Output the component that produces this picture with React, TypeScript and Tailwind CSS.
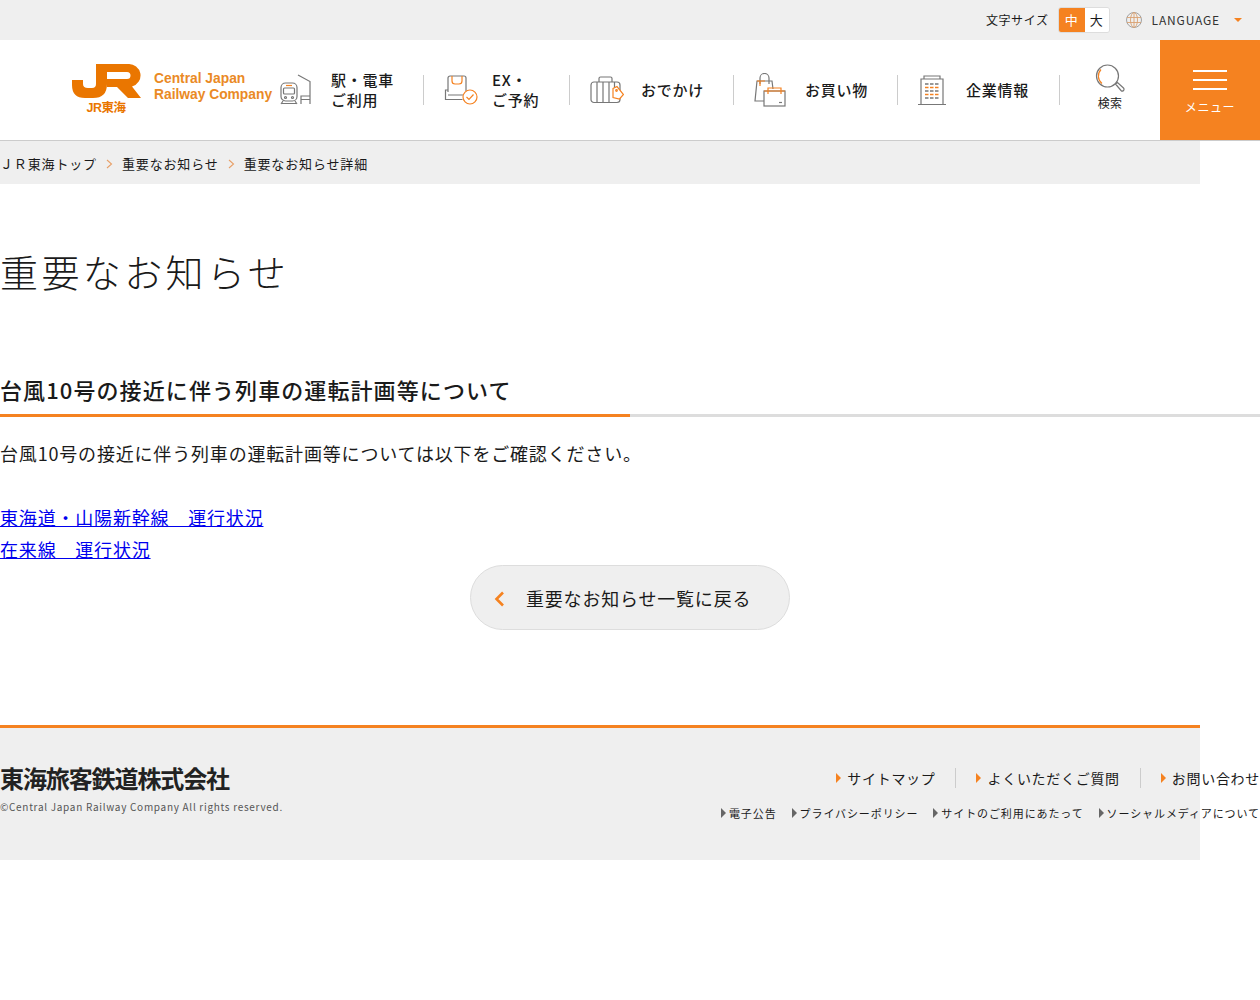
import React from "react";

const ORANGE = "#f58220";

function TrainIcon() {
  return (
    <svg width="32" height="32" viewBox="0 0 32 32" fill="none" stroke="#777" strokeWidth="1.2">
      <rect x="1" y="9" width="16" height="18" rx="4.5" />
      <rect x="3.500" y="14" width="11" height="6" rx="1" />
      <path d="M6 11.500h6" stroke={ORANGE} />
      <path d="M3 27l-2 3M15 27l2 3M2 29.500h14" />
      <circle cx="5.500" cy="23.500" r="1" />
      <circle cx="12.500" cy="23.500" r="1" />
      <path d="M18 1l12 6.500V30M21 30V22h9M21 25.500h9" />
    </svg>
  );
}

function SeatIcon() {
  return (
    <svg width="34" height="30" viewBox="0 0 34 30" fill="none" stroke="#777" strokeWidth="1.2">
      <path d="M4 17V3a2 2 0 0 1 2-2h14a2 2 0 0 1 2 2v13" />
      <path d="M8 1v5a3 3 0 0 0 3 3h4a3 3 0 0 0 3-3V1" stroke={ORANGE} />
      <path d="M4 15H1.500v9.500h17M4 20h15" />
      <circle cx="26" cy="22" r="7" fill="#fff" stroke={ORANGE} />
      <path d="M22.500 22l2.500 2.500 4.500-5" stroke={ORANGE} />
    </svg>
  );
}

function CaseIcon() {
  return (
    <svg width="34" height="28" viewBox="0 0 34 28" fill="none" stroke="#777" strokeWidth="1.2">
      <rect x="1" y="6" width="29" height="20.500" rx="3" />
      <path d="M9 6V2.500A1.500 1.500 0 0 1 10.500 1h10A1.500 1.500 0 0 1 22 2.500V6M7 6v20.500M13 6v20.500M19 6v20.500M24.500 6v8" />
      <path d="M23 12.500l4-2 6.500 8-4 4.500-6.500-1.500z" fill="#fff" stroke={ORANGE} />
      <circle cx="26.500" cy="14.500" r="0.800" stroke={ORANGE} />
    </svg>
  );
}

function BagsIcon() {
  return (
    <svg width="32" height="34" viewBox="0 0 32 34" fill="none" stroke="#777" strokeWidth="1.2">
      <path d="M10 28H1L3 8h15l1 8" />
      <path d="M6 11V5a4.500 4.500 0 0 1 9 0v6" />
      <path d="M3 8h8M6 8v5" stroke={ORANGE} />
      <rect x="10" y="18" width="21" height="15" fill="#fff" />
      <path d="M14 21v-6h13v6M10 18h21" stroke={ORANGE} />
      <path d="M25 29.500h3" />
    </svg>
  );
}

function BuildingIcon() {
  const rows = [0, 1, 2, 3, 4];
  return (
    <svg width="28" height="30" viewBox="0 0 28 30" fill="none" stroke="#777" strokeWidth="1.2">
      <path d="M3 29V4h22v25M0 29.500h28M6 4V1h16v3" />
      {rows.map((r) => (
        <path
          key={r}
          d={`M7 ${9 + r * 3.500}h3.500M12 ${9 + r * 3.500}h3.500M17 ${9 + r * 3.500}h3.500`}
          stroke={r % 2 ? ORANGE : "#777"}
          strokeWidth="1.600"
        />
      ))}
    </svg>
  );
}

function SearchIcon() {
  return (
    <svg width="30" height="30" viewBox="0 0 30 30" fill="none" stroke="#777" strokeWidth="1.2">
      <circle cx="12.500" cy="12" r="11" />
      <path d="M6 5.500a9.500 9.500 0 0 0 1 14" stroke={ORANGE} />
      <path d="M20.500 20l2-1.500 6 5.500a1.500 1.500 0 0 1-2.500 2.500z" />
    </svg>
  );
}

function GlobeIcon() {
  return (
    <svg width="16" height="16" viewBox="0 0 16 16" fill="none" stroke="#d9a070" strokeWidth="0.900">
      <circle cx="8" cy="8" r="7.500" stroke="#999" />
      <ellipse cx="8" cy="8" rx="3.500" ry="7.500" />
      <path d="M8 .5v15M1 5.500h14M1 10.500h14" />
    </svg>
  );
}

function JrLogo() {
  return (
    <svg width="70" height="34" viewBox="0 0 70 34" fill="#ea7600">
      <path d="M1 16h11v4q0 4 5 4h4q4 0 4-4V0h11v20q0 14-14 14H14Q1 34 1 21z" />
      <path d="M36 0h21a12 11.500 0 0 1 4 22.500L70 34H57L46 23H36v-8h20a3.500 3.500 0 0 0 0-7H36z" />
    </svg>
  );
}

const NAV = [
  { icon: <TrainIcon />, lines: ["駅・電車", "ご利用"], cls: "w-[144px] pr-[30px] gap-[19px]" },
  { icon: <SeatIcon />, lines: ["EX・", "ご予約"], cls: "w-[146px] pl-[20px] gap-[14px]" },
  { icon: <CaseIcon />, lines: ["おでかけ"], cls: "w-[164px] pl-[20px] gap-[17px]" },
  { icon: <BagsIcon />, lines: ["お買い物"], cls: "w-[164px] pl-[20px] gap-[19px]" },
  { icon: <BuildingIcon />, lines: ["企業情報"], cls: "w-[162px] pl-[20px] gap-[20px]" },
];

function Crumb({ label, last }: { label: string; last?: boolean }) {
  return (
    <li className="flex items-center">
      <span>{label}</span>
      {!last && (
        <svg width="7" height="10" viewBox="0 0 7 10" fill="none" stroke="#e8a068" strokeWidth="1.1" className="mx-[9px]">
          <path d="M1 1l4.500 4L1 9" />
        </svg>
      )}
    </li>
  );
}

function FootLink({ label, big }: { label: string; big?: boolean }) {
  return (
    <span className="flex items-center whitespace-nowrap">
      <span
        className={
          big
            ? "mr-[6px] border-y-[5px] border-l-[5px] border-y-transparent border-l-[#f58220]"
            : "mr-[3px] border-y-[5px] border-l-[5px] border-y-transparent border-l-[#666]"
        }
      />
      {label}
    </span>
  );
}

export default function App() {
  return (
    <div
      className="min-h-[1000px] overflow-x-hidden bg-white text-[#1a1a1a]"
      style={{ fontFamily: '"Noto Sans CJK JP", "Noto Sans", sans-serif' }}
    >
      <div className="flex h-[40px] items-center justify-end bg-[#efefef] pr-[18px] text-[12px] tracking-[0.05em]">
        <span className="mr-[9px]">文字サイズ</span>
        <div className="mr-[16px] flex h-[26px] w-[52px] overflow-hidden rounded-[3px] border border-[#ddd] text-[13px]">
          <span className="flex w-[26px] items-center justify-center bg-[#f58220] text-white">中</span>
          <span className="flex flex-1 items-center justify-center bg-white">大</span>
        </div>
        <GlobeIcon />
        <span className="ml-[10px] mr-[14px] tracking-[0.07em] text-[#333]">LANGUAGE</span>
        <span className="border-x-[4px] border-t-[4px] border-x-transparent border-t-[#f58220]" />
      </div>

      <header className="flex h-[101px] border-b border-[#cccccc] bg-white">
        <a className="flex w-[280px] items-start pl-[71px] pt-[24px]">
          <span className="flex w-[70px] flex-col items-center">
            <JrLogo />
            <span
              className="mt-[3px] text-[12.500px] font-bold leading-[14px] tracking-[-0.04em] text-[#ea7600]"
              style={{ fontFamily: '"Liberation Sans", "Noto Sans CJK JP", sans-serif' }}
            >
              JR東海
            </span>
          </span>
          <span
            className="ml-[13px] mt-[7px] whitespace-nowrap text-[13.800px] font-bold leading-[15.500px] text-[#ea8a25]"
            style={{ fontFamily: '"Liberation Sans", sans-serif' }}
          >
            Central Japan
            <br />
            Railway Company
          </span>
        </a>
        <ul className="flex items-center">
          {NAV.map((n) => (
            <li key={n.lines[0]} className={`flex h-[30px] items-center border-r border-[#cccccc] ${n.cls}`}>
              <span className="flex shrink-0">{n.icon}</span>
              <span className="whitespace-nowrap text-[15px] font-medium leading-[20px] tracking-[0.05em]">
                {n.lines.map((l) => (
                  <span key={l} className="block">
                    {l}
                  </span>
                ))}
              </span>
            </li>
          ))}
        </ul>
        <div className="flex w-[100px] flex-col items-center pt-[24px]">
          <SearchIcon />
          <span className="text-[12px] leading-[18px] tracking-[0.03em]">検索</span>
        </div>
        <div className="flex w-[100px] flex-col items-center bg-[#f58220] pt-[30px] text-white">
          <span className="h-[2px] w-[34px] bg-white" />
          <span className="mt-[7px] h-[2px] w-[34px] bg-white" />
          <span className="mt-[7px] h-[2px] w-[34px] bg-white" />
          <span className="mt-[8px] text-[12px] leading-[18px] tracking-[0.05em]">メニュー</span>
        </div>
      </header>

      <ul className="flex h-[43px] w-[1200px] items-center bg-[#efefef] pt-[3px] text-[13px] tracking-[0.85px]">
        <Crumb label="ＪＲ東海トップ" />
        <Crumb label="重要なお知らせ" />
        <Crumb label="重要なお知らせ詳細" last />
      </ul>

      <h1 className="mt-[57px] text-[38px] font-light leading-[60px] tracking-[3.4px]">重要なお知らせ</h1>

      <h2 className="mt-[72px] text-[22px] font-medium leading-[32px] tracking-[1.09px]">台風10号の接近に伴う列車の運転計画等について</h2>
      <div className="mt-[9px] h-[3px] bg-[#dddddd]">
        <div className="h-full w-[630px] bg-[#f58220]" />
      </div>

      <p className="mt-[20px] text-[18px] leading-[32px] tracking-[0.82px]">台風10号の接近に伴う列車の運転計画等については以下をご確認ください。</p>

      <div className="mt-[32px] text-[18px] leading-[32px] tracking-[0.82px] text-[#0000ee]">
        <a className="block w-fit underline">東海道・山陽新幹線　運行状況</a>
        <a className="block w-fit underline">在来線　運行状況</a>
      </div>

      <a className="mx-auto flex h-[65px] w-[320px] items-center rounded-full border border-[#dddddd] bg-[#efefef] pl-[23px] pt-[2px] text-[18px] tracking-[0.8px]">
        <svg width="11" height="16" viewBox="0 0 11 16" fill="none" stroke="#f58220" strokeWidth="2.600" className="mr-[21px]">
          <path d="M9 1.500L2.500 8 9 14.500" />
        </svg>
        重要なお知らせ一覧に戻る
      </a>

      <footer className="mt-[95px] flex h-[135px] w-[1200px] justify-between border-t-[3px] border-[#f58220] bg-[#efefef]">
        <div className="pt-[33px]">
          <div className="text-[24px] font-bold leading-[34px] tracking-[-1.1px] text-[#222]">東海旅客鉄道株式会社</div>
          <div className="mt-[4px] text-[10px] leading-[16px] tracking-[0.7px] text-[#555]">
            ©Central Japan Railway Company All rights reserved.
          </div>
        </div>
        <div className="mr-[-60px] flex flex-col items-end pt-[40px]">
          <div className="flex h-[20px] items-center text-[14px] tracking-[0.7px]">
            <FootLink label="サイトマップ" big />
            <span className="mx-[20px] h-[20px] w-px bg-[#cccccc]" />
            <FootLink label="よくいただくご質問" big />
            <span className="mx-[20px] h-[20px] w-px bg-[#cccccc]" />
            <FootLink label="お問い合わせ" big />
          </div>
          <div className="mt-[17px] flex gap-[15px] text-[11px] leading-[16px] tracking-[0.9px]">
            <FootLink label="電子公告" />
            <FootLink label="プライバシーポリシー" />
            <FootLink label="サイトのご利用にあたって" />
            <FootLink label="ソーシャルメディアについて" />
          </div>
        </div>
      </footer>
    </div>
  );
}
